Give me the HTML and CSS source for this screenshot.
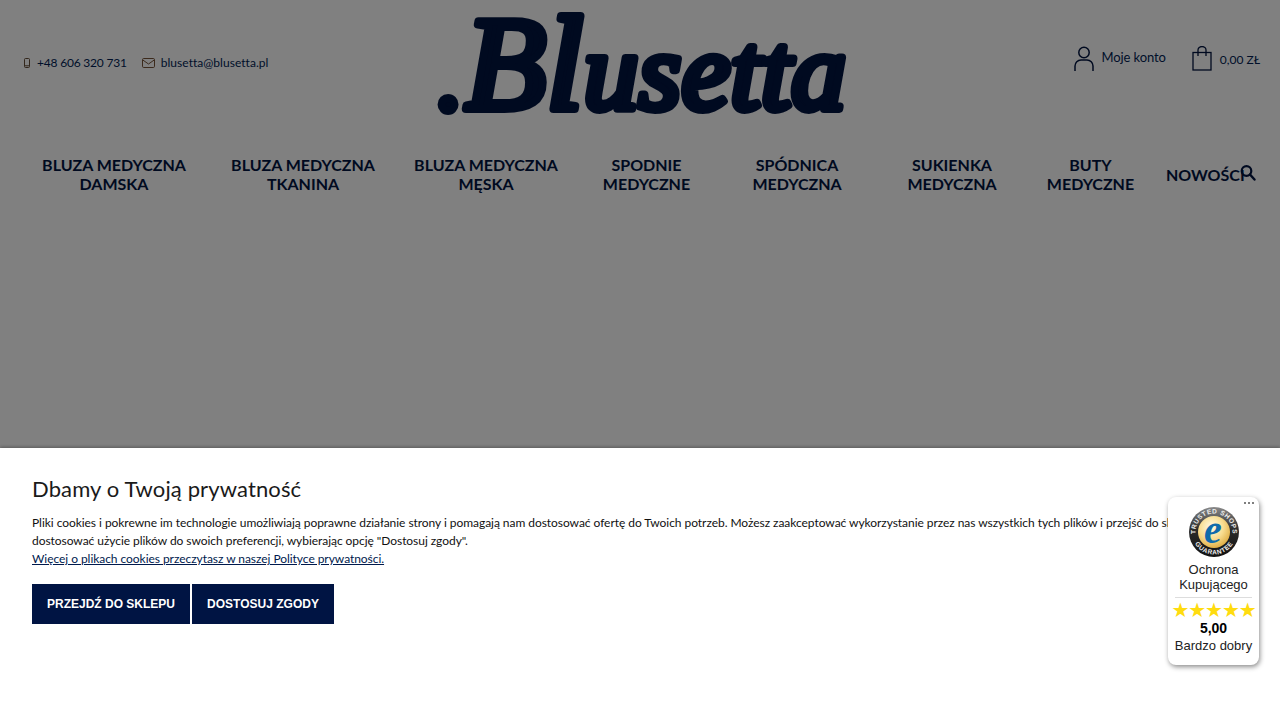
FILE: index.html
```html
<!DOCTYPE html>
<html lang="pl">
<head>
<meta charset="utf-8">
<title>Blusetta</title>
<link rel="stylesheet" href="styles.css">
</head>
<body>
<div class="page">
  <header class="top">
    <div class="contact">
      <span class="contact-item phone">
        <svg class="i-phone" width="6" height="10" viewBox="0 0 6 10"><rect x=".5" y=".5" width="5" height="9" rx="1" fill="none" stroke="#33271c"/><path d="M1 7.8h4" stroke="#33271c"/></svg>
        +48 606 320 731
      </span>
      <span class="contact-item mail">
        <svg width="13" height="10" viewBox="0 0 13 10"><rect x=".5" y=".5" width="12" height="9" rx="1.2" fill="none" stroke="#3c2a1c"/><path d="M.8 2l5.7 4 5.700-4" fill="none" stroke="#3c2a1c"/></svg>
        blusetta@blusetta.pl
      </span>
    </div>
    <a class="logo" href="#">
      <svg width="410" height="115" viewBox="0 0 410 115"><text x="0" y="99" class="logo-text"><tspan>.</tspan><tspan class="logo-big">Bl</tspan><tspan>usetta</tspan></text></svg>
    </a>
    <div class="account">
      <span class="account-item">
        <svg width="20" height="26" viewBox="0 0 20 26"><circle cx="10" cy="6.500" r="5.200" fill="none" stroke="#000a20" stroke-width="1.500"/><path d="M1 25v-5a6 6 0 0 1 6-6h6a6 6 0 0 1 6 6v5" fill="none" stroke="#000a20" stroke-width="1.500"/></svg>
        <span class="account-label">Moje konto</span>
      </span>
      <span class="account-item cart">
        <svg width="20" height="25" viewBox="0 0 20 25"><rect x="1" y="6.500" width="18" height="17.500" fill="none" stroke="#000a20" stroke-width="1.300"/><path d="M6 10V4a4 3.500 0 0 1 8 0v6" fill="none" stroke="#000a20" stroke-width="1.300"/></svg>
        <span class="cart-sum">0,00 zł</span>
      </span>
    </div>
  </header>
  <nav class="nav">
    <a class="nav-item w1" href="#">Bluza medyczna<br>damska</a>
    <a class="nav-item w2" href="#">Bluza medyczna<br>tkanina</a>
    <a class="nav-item w3" href="#">Bluza medyczna<br>męska</a>
    <a class="nav-item w4" href="#">Spodnie<br>medyczne</a>
    <a class="nav-item w5" href="#">Spódnica<br>medyczna</a>
    <a class="nav-item w6" href="#">Sukienka<br>medyczna</a>
    <a class="nav-item w7" href="#">Buty<br>medyczne</a>
    <a class="nav-item w8" href="#">Nowości</a>
    <svg class="search" width="16" height="16" viewBox="0 0 16 16"><circle cx="6.500" cy="6" r="4.800" fill="none" stroke="#000a20" stroke-width="2.200"/><path d="M10 9.500l4.500 5" stroke="#000a20" stroke-width="2.400" stroke-linecap="round"/></svg>
  </nav>
</div>
<section class="cookie">
  <h2 class="cookie-title">Dbamy o Twoją prywatność</h2>
  <p class="cookie-text">Pliki cookies i pokrewne im technologie umożliwiają poprawne działanie strony i pomagają nam dostosować ofertę do Twoich potrzeb. Możesz zaakceptować wykorzystanie przez nas wszystkich tych plików i przejść do sklepu lub dostosować użycie plików do swoich preferencji, wybierając opcję "Dostosuj zgody".<br><a href="#">Więcej o plikach cookies przeczytasz w naszej Polityce prywatności.</a></p>
  <div class="cookie-actions">
    <button class="btn btn-a">Przejdź do sklepu</button>
    <button class="btn btn-b">Dostosuj zgody</button>
  </div>
</section>
<aside class="badge">
  <span class="badge-dots"><i></i><i></i><i></i></span>
  <svg class="seal" width="50" height="50" viewBox="0 0 50 50">
    <defs>
      <radialGradient id="gold" cx=".42" cy=".35" r=".7"><stop offset="0" stop-color="#fffbe6"/><stop offset=".55" stop-color="#f8dc8e"/><stop offset="1" stop-color="#dca83c"/></radialGradient>
      <linearGradient id="rim" x1="0" y1="0" x2="0" y2="1"><stop offset="0" stop-color="#8a8a8a"/><stop offset=".45" stop-color="#2b2b2b"/><stop offset="1" stop-color="#111"/></linearGradient>
      <path id="arcTop" d="M6.500 25a18.500 18.500 0 0 1 37 0"/>
      <path id="arcBot" d="M2.500 25a22.500 22.500 0 0 0 45 0"/>
    </defs>
    <circle cx="25" cy="25" r="25" fill="url(#rim)"/>
    <circle cx="25" cy="25" r="16" fill="url(#gold)"/>
    <text class="seal-ring" text-anchor="middle"><textPath href="#arcTop" startOffset="50%">TRUSTED SHOPS</textPath></text>
    <text class="seal-ring" text-anchor="middle"><textPath href="#arcBot" startOffset="50%">GUARANTEE</textPath></text>
    <text x="24" y="36" text-anchor="middle" class="seal-e">e</text>
  </svg>
  <div class="badge-title">Ochrona<br>Kupującego</div>
  <div class="badge-rule"></div>
  <div class="stars">★★★★★</div>
  <div class="score">5,00</div>
  <div class="grade">Bardzo dobry</div>
</aside>
</body>
</html>
```
FILE: styles.css
```css
* { box-sizing: border-box; }
html, body { margin: 0; padding: 0; height: 720px; overflow: hidden; }
body { background: #808080; font-family: Lato, sans-serif; color: #000a20; position: relative; }
a { color: inherit; text-decoration: none; }

.page { height: 448px; }
.top { display: flex; align-items: flex-start; height: 125px; padding: 10px 20px 0 24px; }
.contact { display: flex; gap: 15px; width: 413px; padding-top: 45px; font-size: 12px; line-height: 16px; color: #000f2a; }
.contact-item { display: inline-flex; align-items: center; gap: 7px; }
.phone { letter-spacing: -.2px; }
.mail { gap: 6px; letter-spacing: .03px; }
.logo { display: block; width: 410px; height: 115px; }
.logo svg { display: block; overflow: visible; }
.logo-text { font-family: "Liberation Serif", serif; font-style: italic; font-weight: 400; font-size: 110px; fill: #000a20; stroke: #000a20; stroke-width: 8px; stroke-linejoin: round; }
.logo-big { font-size: 134px; }
.account { display: flex; margin-left: auto; gap: 26px; padding-top: 36px; font-size: 13px; color: #000f2a; }
.account-item { display: inline-flex; align-items: flex-start; gap: 7px; }
.account-label { line-height: 22px; letter-spacing: -.1px; }
.cart { gap: 8px; }
.cart-sum { text-transform: uppercase; line-height: 24px; font-size: 12px; padding-top: 2px; }

.nav { position: relative; display: flex; padding: 30px 0 0 19px; font-size: 16px; line-height: 19px; font-weight: 700; }
.nav-item { display: block; text-align: center; text-transform: uppercase; color: #000a20; }
.w1 { width: 190px; }
.w2 { width: 188px; }
.w3 { width: 178px; }
.w4 { width: 143px; }
.w5 { width: 158px; }
.w6 { width: 152px; }
.w7 { width: 125px; }
.w8 { padding: 10px 0 0 13px; white-space: nowrap; text-align: left; }
.search { position: absolute; left: 1240px; top: 40px; }

.cookie { height: 272px; background: #fff; padding: 28px 32px 0; color: #111; box-shadow: 0 -1px 3px rgba(0,0,0,.3); position: relative; }
.cookie-title { margin: 0 0 12px; font-size: 22px; line-height: 26px; font-weight: 400; color: #1a1a1a; letter-spacing: .12px; }
.cookie-text { margin: 0 0 16px; font-size: 12px; line-height: 18px; color: #111; letter-spacing: -.05px; }
.cookie-text a { color: #001a4d; text-decoration: underline; }
.cookie-actions { display: flex; gap: 2px; }
.btn { height: 40px; border: 0; background: #001443; color: #fff; font-family: "Liberation Sans", sans-serif; font-weight: 700; font-size: 12px; text-transform: uppercase; padding: 0; }
.btn-a { width: 158px; }
.btn-b { width: 142px; }

.badge { position: absolute; left: 1168px; top: 497px; width: 91px; height: 168px; background: #fff; border-radius: 8px; box-shadow: 1px 2px 5px rgba(0,0,0,.45); font-family: "Liberation Sans", sans-serif; text-align: center; color: #222; font-size: 13px; padding-top: 10px; }
.badge-dots { position: absolute; right: 5px; top: 5px; display: flex; gap: 2px; }
.badge-dots i { display: block; width: 2px; height: 2px; border-radius: 50%; background: #555; }
.seal { display: block; margin: 0 auto 5px; }
.seal-ring { font-family: "Liberation Sans", sans-serif; font-size: 6.500px; font-weight: 700; fill: #eee; letter-spacing: .5px; }
.seal-e { font-family: "Liberation Serif", serif; font-style: italic; font-weight: 700; font-size: 40px; fill: #0f6bab; }
.badge-title { line-height: 15px; }
.badge-rule { height: 1px; background: #ddd; margin: 5px 7px 3px; }
.stars { color: #ffdc0f; font-size: 20px; line-height: 18px; letter-spacing: -1.1px; white-space: nowrap; font-family: "DejaVu Sans", sans-serif; }
.score { font-weight: 700; font-size: 14px; color: #000; line-height: 18px; }
.grade { line-height: 18px; }
```
